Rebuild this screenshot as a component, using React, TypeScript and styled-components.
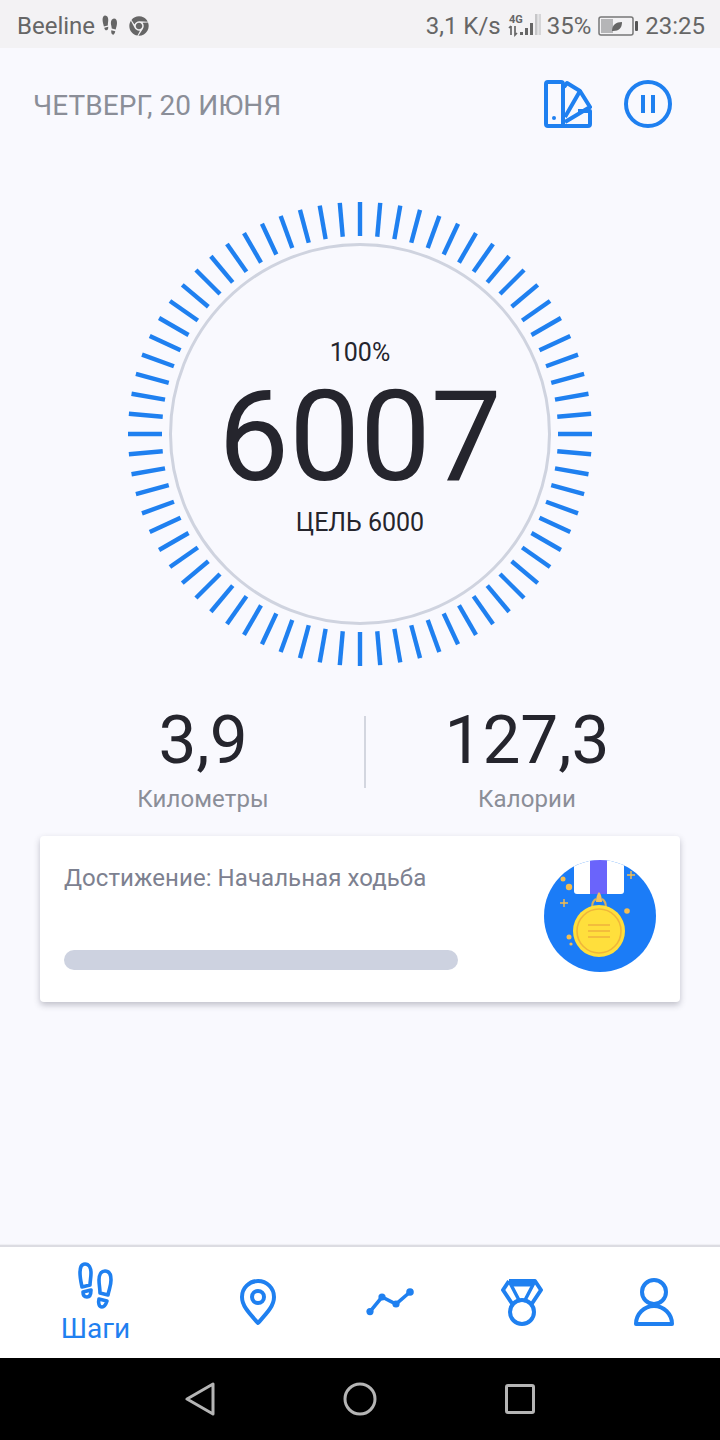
import React from 'react';
import styled, { createGlobalStyle } from 'styled-components';
import { FaChrome } from 'react-icons/fa';

const Global = createGlobalStyle`
  html, body { margin: 0; padding: 0; background: #f9f9fe; }
  * { box-sizing: border-box; }
`;
const Screen = styled.div`
  width: 720px; height: 1440px; display: flex; flex-direction: column; overflow: hidden;
  background: #f9f9fe; font-family: Roboto, "Noto Sans", sans-serif;
`;
const StatusBar = styled.div`
  height: 48px; flex: none; background: #f3f2f4; color: #666; font-size: 24px;
  display: flex; align-items: center; justify-content: space-between; padding: 3px 15px 0 17px;
`;
const StatusGroup = styled.div`display: flex; align-items: center;`;
const StatusText = styled.span<{ $ml?: number }>`margin-left: ${p => p.$ml ?? 0}px; line-height: 1;`;
const Spacer = styled.span<{ $w: number }>`width: ${p => p.$w}px; flex: none;`;
const Main = styled.main`flex: 1; display: flex; flex-direction: column;`;
const Header = styled.header`
  height: 112px; flex: none; display: flex; align-items: center; justify-content: space-between;
  padding: 0 48px 0 33px;
`;
const DateText = styled.div`font-size: 28px; letter-spacing: 0.08px; color: #8b8e98; margin-top: 2px;`;
const Actions = styled.div`display: flex; align-items: center; gap: 32px;`;
const Gauge = styled.div`
  width: 480px; height: 480px; margin: 34px auto 0; position: relative;
`;
const GaugeCenter = styled.div`
  position: absolute; inset: 0; display: flex; flex-direction: column; align-items: center; color: #25252d;
`;
const Percent = styled.div`font-size: 25px; line-height: 28px; margin-top: 145px;`;
const Steps = styled.div`font-size: 126px; line-height: 104px; margin-top: 18px;`;
const Goal = styled.div`font-size: 25px; line-height: 28px; margin-top: 20px;`;
const Stats = styled.section`
  display: grid; grid-template-columns: 1fr 2px 1fr; margin-top: 28px; padding: 0 32px 0 42px; align-items: center;
`;
const Stat = styled.div`display: flex; flex-direction: column; align-items: center;`;
const StatValue = styled.div`font-size: 67.5px; line-height: 76px; color: #25252d;`;
const StatLabel = styled.div`font-size: 24px; letter-spacing: 0.1px; line-height: 28px; color: #8b8e98; margin-top: 7px;`;
const Divider = styled.div`width: 2px; height: 72px; background: #d3d6df; margin-top: -11px;`;
const Card = styled.section`
  margin: 23px 40px 0; height: 166px; background: #fff; border-radius: 4px;
  box-shadow: 0 3px 6px rgba(60, 60, 80, .3); display: flex; justify-content: space-between; padding: 24px;
`;
const CardBody = styled.div`display: flex; flex-direction: column; width: 394px;`;
const CardTitle = styled.div`font-size: 24px; letter-spacing: 0.07px; line-height: 36px; color: #7d8190; white-space: nowrap;`;
const Progress = styled.div`height: 20px; border-radius: 10px; background: #cdd2e0; margin-top: 54px;`;
const Nav = styled.nav`
  height: 113px; flex: none; display: flex; background: #fff; border-top: 2px solid #dcdce2;
  box-shadow: 0 -1px 1px rgba(0, 0, 0, .04);
`;
const NavItem = styled.div<{ $active?: boolean }>`
  width: ${p => (p.$active ? 192 : 132)}px; display: flex; flex-direction: column; align-items: center; justify-content: center;
  color: #1f80f0; padding-bottom: ${p => (p.$active ? 0 : 2)}px;
`;
const NavLabel = styled.span`font-size: 28px; line-height: 30px; margin-top: 4px; margin-left: -1px;`;
const SystemBar = styled.div`
  height: 82px; flex: none; background: #000; display: flex; align-items: center; justify-content: center; gap: 128px;
`;

const BLUE = '#1f80f0';

const ticks = Array.from({ length: 72 }, (_, i) => i * 5);

const Ring = () => (
  <svg width="480" height="480" viewBox="0 0 480 480" style={{ display: 'block' }}>
    <circle cx="240" cy="240" r="189.5" fill="none" stroke="#cfd3df" strokeWidth="3" />
    {ticks.map(a => (
      <line key={a} x1="240" y1="8" x2="240" y2="42" stroke={BLUE} strokeWidth="4.4" transform={`rotate(${a} 240 240)`} />
    ))}
  </svg>
);

const FootMini = () => (
  <svg width="16" height="21" viewBox="0 0 36 48" fill="#666">
    <path d="M7 1c5 0 7 5 7 10 0 5-1 8-1 13L4 26C3 21 1 17 1 11 1 5 3 1 7 1z" />
    <path d="M5 29l9-2c0 5-1 8-4 8-3 0-5-3-5-6z" />
    <path d="M27 8c5 0 7 4 7 10 0 6-2 10-3 15l-9-2c0-5-2-8-2-13 0-5 3-10 7-10z" />
    <path d="M21 35l9 2c-1 5-3 8-5 8-3 0-5-4-4-10z" />
  </svg>
);

const Signal = () => (
  <svg width="34" height="30" viewBox="0 0 34 30">
    <text x="1" y="12" fontFamily="Roboto, sans-serif" fontSize="11" fontWeight="700" fill="#666">4G</text>
    <path d="M3 15v9M1 17l2-2M7 15v9l2-2" stroke="#666" strokeWidth="1.7" fill="none" />
    <rect x="12" y="21" width="3" height="3" fill="#666" />
    <rect x="17" y="17" width="3" height="7" fill="#666" />
    <rect x="22" y="12" width="3" height="12" fill="#666" />
    <rect x="27" y="3" width="2.5" height="21" fill="#c6c6c8" />
    <rect x="30.5" y="3" width="2.5" height="21" fill="#d6d6d8" />
  </svg>
);

const Battery = () => (
  <svg width="40" height="22" viewBox="0 0 40 22" style={{ marginLeft: 7 }}>
    <rect x="1" y="2" width="34" height="18" rx="2" fill="none" stroke="#777" strokeWidth="1.5" />
    <rect x="3" y="4" width="12" height="14" fill="#b5b5b7" />
    <path d="M14 16c0-6 4-9 10-9 0 6-3 9-9 9z" fill="#666" />
    <rect x="37" y="6" width="3" height="10" rx="1" fill="#555" />
  </svg>
);

const Palette = () => (
  <svg width="48" height="48" viewBox="0 0 48 48" fill="none" stroke={BLUE} strokeWidth="4" strokeLinejoin="round">
    <rect x="2" y="2" width="17" height="44" rx="2" />
    <circle cx="10" cy="38" r="2" fill={BLUE} stroke="none" />
    <path d="M20 7l3-4 13 8-15 26" />
    <path d="M36 11l10 16-25 15" />
    <path d="M34 31h12v13a2 2 0 0 1-2 2H10" />
  </svg>
);

const Pause = () => (
  <svg width="48" height="48" viewBox="0 0 48 48" fill="none" stroke={BLUE}>
    <circle cx="24" cy="24" r="22" strokeWidth="4" />
    <path d="M19 15v18M29 15v18" strokeWidth="4" />
  </svg>
);

const Medal = () => (
  <svg width="112" height="112" viewBox="0 0 112 112">
    <defs><clipPath id="m"><circle cx="56" cy="56" r="56" /></clipPath></defs>
    <circle cx="56" cy="56" r="56" fill="#1b7cf7" />
    <g clipPath="url(#m)">
      <path d="M30 0h50v31a3 3 0 0 1-3 3H33a3 3 0 0 1-3-3z" fill="#fff" />
      <rect x="46" y="0" width="17" height="34" fill="#6a64fb" />
    </g>
    <path d="M48 48c0-5 2-8 4-9" fill="none" stroke="#d8b25a" strokeWidth="2" />
    <path d="M62 48c0-5-2-8-4-9" fill="none" stroke="#d8b25a" strokeWidth="2" />
    <path d="M52 42c0-4 1-8 3-10 2 2 3 6 3 10z" fill="#f7c15a" />
    <circle cx="55" cy="71" r="26" fill="#ffdf3c" />
    <circle cx="55" cy="71" r="22" fill="none" stroke="#f0b63a" strokeWidth="1.6" />
    <path d="M44 65h22M44 71h22M44 77h22" stroke="#efb23c" strokeWidth="1.6" />
    <g fill="#f5bd4f">
      <circle cx="19" cy="19" r="2.5" />
      <circle cx="25" cy="27" r="3.2" />
      <circle cx="83" cy="51" r="2.8" />
      <circle cx="25" cy="77" r="2.5" />
      <circle cx="27" cy="84" r="1.6" />
    </g>
    <path d="M20 39v8M16 43h8M87 11v8M83 15h8" stroke="#f5bd4f" strokeWidth="1.4" />
  </svg>
);

const FootIcon = () => (
  <svg width="36" height="48" viewBox="0 0 36 48" fill="none" stroke={BLUE} strokeWidth="3.6" strokeLinejoin="round">
    <path d="M7 2c4 0 6 4 6 9 0 5-1 8-1 12l-8 2C3 20 2 16 2 11 2 6 3 2 7 2z" />
    <path d="M5 30l8-2c0 4-1 7-4 7s-4-2-4-5z" />
    <path d="M27 9c4 0 6 3 6 9 0 6-2 9-3 15l-8-2c0-5-1-8-1-13 0-5 2-9 6-9z" />
    <path d="M21 37l8 2c-1 3-2 6-5 6s-4-4-3-8z" />
  </svg>
);

const PinIcon = () => (
  <svg width="38" height="48" viewBox="0 0 38 48" fill="none" stroke={BLUE} strokeWidth="4" strokeLinejoin="round">
    <path d="M19 45C10 35 3 28 3 19a16 16 0 0 1 32 0c0 9-7 16-16 26z" />
    <circle cx="19" cy="19" r="6" />
  </svg>
);

const TrendIcon = () => (
  <svg width="50" height="30" viewBox="0 0 50 30" fill={BLUE} stroke={BLUE} strokeWidth="3.6">
    <path d="M5 24.6L17 10l14 7L45 5" fill="none" />
    <circle cx="5" cy="24.6" r="3.6" stroke="none" />
    <circle cx="17" cy="10" r="3.6" stroke="none" />
    <circle cx="31" cy="17" r="3.6" stroke="none" />
    <circle cx="45" cy="5" r="3.8" stroke="none" />
  </svg>
);

const AwardIcon = () => (
  <svg width="44" height="48" viewBox="0 0 44 48" fill="none" stroke={BLUE} strokeWidth="4" strokeLinejoin="round">
    <path d="M9 3h26l6 9-10 15M13 27L3 12l6-9" />
    <path d="M9 3l11 21M35 3L24 24" strokeWidth="3.4" />
    <path d="M11 6h22" strokeWidth="5" />
    <circle cx="22" cy="34" r="12" />
  </svg>
);

const UserIcon = () => (
  <svg width="42" height="48" viewBox="0 0 42 48" fill="none" stroke={BLUE} strokeWidth="4" strokeLinejoin="round">
    <circle cx="21" cy="14" r="12" />
    <path d="M3 46a18 18 0 0 1 36 0z" />
  </svg>
);

const Back = () => (
  <svg width="30" height="34" viewBox="0 0 30 34" fill="none" stroke="#b5b5b5" strokeWidth="3" strokeLinejoin="round">
    <path d="M28 2v30L2 17z" />
  </svg>
);
const Home = () => (
  <svg width="34" height="34" viewBox="0 0 34 34" fill="none" stroke="#b5b5b5" strokeWidth="3"><circle cx="17" cy="17" r="15" /></svg>
);
const Recent = () => (
  <svg width="30" height="30" viewBox="0 0 30 30" fill="none" stroke="#b5b5b5" strokeWidth="3" strokeLinejoin="round"><rect x="1.5" y="1.5" width="27" height="27" rx="1.5" /></svg>
);

export default function App() {
  return (
    <Screen>
      <Global />
      <StatusBar>
        <StatusGroup>
          <StatusText>Beeline</StatusText>
          <Spacer $w={7} />
          <FootMini />
          <Spacer $w={11} />
          <FaChrome size={20} color="#666" />
        </StatusGroup>
        <StatusGroup>
          <StatusText>3,1 K/s</StatusText>
          <Spacer $w={7} />
          <Signal />
          <Spacer $w={5} />
          <StatusText>35%</StatusText>
          <Battery />
          <StatusText $ml={7}>23:25</StatusText>
        </StatusGroup>
      </StatusBar>
      <Main>
        <Header>
          <DateText>ЧЕТВЕРГ, 20 ИЮНЯ</DateText>
          <Actions><Palette /><Pause /></Actions>
        </Header>
        <Gauge>
          <Ring />
          <GaugeCenter>
            <Percent>100%</Percent>
            <Steps>6007</Steps>
            <Goal>ЦЕЛЬ 6000</Goal>
          </GaugeCenter>
        </Gauge>
        <Stats>
          <Stat><StatValue>3,9</StatValue><StatLabel>Километры</StatLabel></Stat>
          <Divider />
          <Stat><StatValue>127,3</StatValue><StatLabel>Калории</StatLabel></Stat>
        </Stats>
        <Card>
          <CardBody>
            <CardTitle>Достижение: Начальная ходьба</CardTitle>
            <Progress />
          </CardBody>
          <Medal />
        </Card>
      </Main>
      <Nav>
        <NavItem $active><FootIcon /><NavLabel>Шаги</NavLabel></NavItem>
        <NavItem><PinIcon /></NavItem>
        <NavItem><TrendIcon /></NavItem>
        <NavItem><AwardIcon /></NavItem>
        <NavItem><UserIcon /></NavItem>
      </Nav>
      <SystemBar><Back /><Home /><Recent /></SystemBar>
    </Screen>
  );
}
